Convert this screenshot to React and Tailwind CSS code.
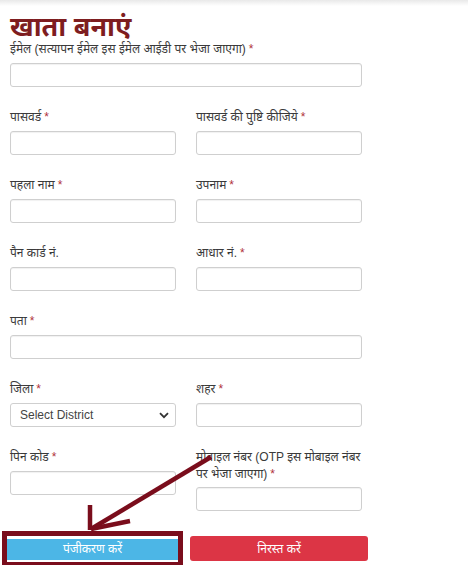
import React from "react";

const Label = ({ children, req, tall }) => (
  <label
    className={
      "block text-[12px] text-[#3a3a3a] " +
      (tall ? "leading-[17px] mb-[4px]" : "leading-[16px] mb-[6px]")
    }
  >
    {children}
    {req && <span className="text-[#b0313a] ml-[3px]">*</span>}
  </label>
);

const Input = () => (
  <input
    type="text"
    className="block w-full h-[24px] border border-[#cfcfcf] rounded-[3px] bg-white shadow-[inset_0_1px_1px_rgba(0,0,0,0.06)] outline-none"
  />
);

export default function App() {
  return (
    <div
      className="relative w-[468px] h-[565px] overflow-hidden bg-white"
      style={{ fontFamily: '"Liberation Sans", "Noto Sans", Arial, sans-serif' }}
    >
      <div className="h-[6px] bg-gradient-to-b from-[#e9e9e9] to-white" />
      <div className="pl-[10px] w-[362px]">
        <h1 className="text-[27px] leading-[27px] font-bold text-[#7e1d1f] mt-[8px]">
          खाता बनाएं
        </h1>
        <div className="mb-[22px]">
          <Label req>ईमेल (सत्यापन ईमेल इस ईमेल आईडी पर भेजा जाएगा)</Label>
          <Input />
        </div>
        <div className="grid grid-cols-[166px_166px] gap-x-[20px] gap-y-[22px]">
          <div>
            <Label req>पासवर्ड</Label>
            <Input />
          </div>
          <div>
            <Label req>पासवर्ड की पुष्टि कीजिये</Label>
            <Input />
          </div>
          <div>
            <Label req>पहला नाम</Label>
            <Input />
          </div>
          <div>
            <Label req>उपनाम</Label>
            <Input />
          </div>
          <div>
            <Label>पैन कार्ड नं.</Label>
            <Input />
          </div>
          <div>
            <Label req>आधार नं.</Label>
            <Input />
          </div>
          <div className="col-span-2">
            <Label req>पता</Label>
            <Input />
          </div>
          <div>
            <Label req>जिला</Label>
            <div className="relative h-[24px] border border-[#cfcfcf] rounded-[3px] bg-white flex items-center pl-[9px] text-[12px] text-[#444]">
              Select District
              <svg
                className="absolute right-[6px] top-[8px]"
                width="10"
                height="7"
                viewBox="0 0 10 7"
              >
                <path d="M1 1.2 L5 5.2 L9 1.2" stroke="#333" strokeWidth="1.8" fill="none" />
              </svg>
            </div>
          </div>
          <div>
            <Label req>शहर</Label>
            <Input />
          </div>
          <div>
            <Label req>पिन कोड</Label>
            <Input />
          </div>
          <div>
            <Label req tall>
              मोबाइल नंबर (OTP इस मोबाइल नंबर पर भेजा जाएगा)
            </Label>
            <Input />
          </div>
        </div>
      </div>
      <div className="flex items-start mt-[20px] ml-[2px] gap-[7px]">
        <div className="border-[5px] border-[#7a0d1c] w-[181px] h-[36px]">
          <button className="w-full h-[21px] bg-[#4cb6e6] text-white text-[12px] leading-[21px]">
            पंजीकरण करें
          </button>
        </div>
        <button className="mt-[5px] w-[178px] h-[25px] rounded-[3px] bg-[#dc3545] text-white text-[12px]">
          निरस्त करें
        </button>
      </div>
      <svg
        className="absolute left-0 top-0 pointer-events-none"
        width="468"
        height="565"
        viewBox="0 0 468 565"
      >
        <g stroke="#7a0d1c" strokeWidth="4.5" strokeLinecap="butt" fill="none">
          <line x1="211" y1="457" x2="91" y2="529" />
          <line x1="90" y1="505" x2="90" y2="530" />
          <line x1="91" y1="529" x2="130" y2="521" />
        </g>
      </svg>
    </div>
  );
}
